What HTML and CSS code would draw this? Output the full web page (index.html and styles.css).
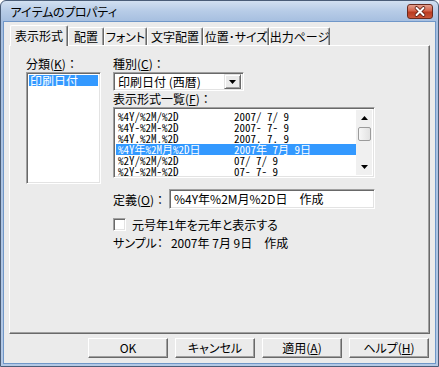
FILE: index.html
```html
<!DOCTYPE html>
<html lang="ja">
<head>
<meta charset="utf-8">
<title>アイテムのプロパティ</title>
<link rel="stylesheet" href="styles.css">
</head>
<body>
<div class="window">
  <div class="titlebar">
    <span class="title">アイテムのプロパティ</span>
    <div class="close">
      <svg width="26" height="15" viewBox="0 0 26 15">
        <path d="M9.5 4 L16.5 11 M16.5 4 L9.5 11" stroke="#5a1a10" stroke-width="3.6" stroke-linecap="round"/>
        <path d="M9.5 4 L16.5 11 M16.5 4 L9.5 11" stroke="#ffffff" stroke-width="2" stroke-linecap="round"/>
      </svg>
    </div>
  </div>
  <div class="client">
    <div class="tabs">
      <div class="tab active t1">表示形式</div>
      <div class="tab t2">配置</div>
      <div class="tab t3">フォント</div>
      <div class="tab t4">文字配置</div>
      <div class="tab t5">位置･サイズ</div>
      <div class="tab t6">出力ページ</div>
    </div>
    <div class="panel">
      <div class="col-left">
        <div class="label">分類(<u>K</u>)：</div>
        <div class="listbox cat">
          <div class="cat-item sel">印刷日付</div>
        </div>
      </div>
      <div class="col-right">
        <div class="label">種別(<u>C</u>)：</div>
        <div class="combo">
          <span class="combo-text">印刷日付 (西暦)</span>
          <span class="combo-btn">
            <svg width="7" height="4" viewBox="0 0 7 4"><path d="M0 0 H7 L3.5 4 Z" fill="#000"/></svg>
          </span>
        </div>
        <div class="label label-tight">表示形式一覧(<u>F</u>)：</div>
        <div class="listbox fmt">
          <div class="rows">
            <div class="row"><span>%4Y/%2M/%2D</span><span>2007/ 7/ 9</span></div>
            <div class="row"><span>%4Y-%2M-%2D</span><span>2007- 7- 9</span></div>
            <div class="row"><span>%4Y.%2M.%2D</span><span>2007. 7. 9</span></div>
            <div class="row sel"><span>%4Y年%2M月%2D日</span><span>2007年 7月 9日</span></div>
            <div class="row"><span>%2Y/%2M/%2D</span><span>07/ 7/ 9</span></div>
            <div class="row"><span>%2Y-%2M-%2D</span><span>07- 7- 9</span></div>
          </div>
          <div class="scrollbar">
            <div class="sb-arrow">
              <svg width="7" height="4" viewBox="0 0 7 4"><path d="M0 4 H7 L3.5 0 Z" fill="#000"/></svg>
            </div>
            <div class="sb-track">
              <div class="sb-thumb"></div>
            </div>
            <div class="sb-arrow">
              <svg width="7" height="4" viewBox="0 0 7 4"><path d="M0 0 H7 L3.5 4 Z" fill="#000"/></svg>
            </div>
          </div>
        </div>
        <div class="def-row">
          <span class="def-label">定義(<u>O</u>)：</span>
          <div class="textbox">%4Y年%2M月%2D日　作成</div>
        </div>
        <div class="check-row">
          <span class="checkbox"></span>
          <span>元号年1年を元年と表示する</span>
        </div>
        <div class="sample"><span class="sample-key">サンプル：</span>2007年 7月 9日　作成</div>
      </div>
    </div>
    <div class="buttons">
      <div class="btn">OK</div>
      <div class="btn">キャンセル</div>
      <div class="btn">適用(<u>A</u>)</div>
      <div class="btn">ヘルプ(<u>H</u>)</div>
    </div>
  </div>
</div>
</body>
</html>
```

FILE: styles.css
```css
html, body {
  margin: 0;
  padding: 0;
  background: #ffffff;
}

body {
  font-family: "Noto Sans CJK JP", sans-serif;
  font-size: 12px;
  color: #000;
}

.window {
  width: 439px;
  height: 367px;
  box-sizing: border-box;
  border: 1px solid #4a5d78;
  border-radius: 6px 6px 0 0;
  background: linear-gradient(to bottom, #d2e0f1 0px, #b7cce7 10px, #a5bedf 21px, #b4c9e5 100%);
  padding: 0 3px 3px;
  display: flex;
  flex-direction: column;
}

.titlebar {
  height: 21px;
  display: flex;
  align-items: center;
  flex-shrink: 0;
}

.title {
  margin-left: 6px;
  font-size: 12px;
  letter-spacing: -1px;
  line-height: 14px;
  color: #000;
}

.close {
  margin-left: auto;
  margin-right: 2px;
  width: 26px;
  height: 15px;
  box-sizing: border-box;
  border: 1px solid #6a2a1e;
  border-radius: 3px;
  background: linear-gradient(to bottom, #e4a08f 0%, #d4634a 45%, #b93a1f 55%, #c8553a 100%);
  display: flex;
  align-items: center;
  justify-content: center;
  overflow: hidden;
}

.close svg {
  display: block;
  margin: -1px;
}

.client {
  flex: 1;
  background: #ebebeb;
  box-shadow: 0 0 0 1px #7097c8;
  padding: 3px 5px 0;
  display: flex;
  flex-direction: column;
}

/* tabs */
.tabs {
  display: flex;
  align-items: flex-end;
  height: 20px;
  margin-left: 1px;
  position: relative;
  z-index: 1;
}

.tab {
  box-sizing: border-box;
  height: 18px;
  border-top: 1px solid #ffffff;
  border-left: 1px solid #ffffff;
  border-right: 1px solid #696969;
  border-radius: 2px 2px 0 0;
  box-shadow: inset -1px 0 0 #a0a0a0;
  background: #ebebeb;
  display: flex;
  align-items: center;
  justify-content: center;
  white-space: nowrap;
  line-height: 14px;
  font-feature-settings: "palt";
}

.tab.active {
  height: 21px;
  margin-bottom: -1px;
  padding-bottom: 1px;
}

.t1 { width: 58px; }
.t2 { width: 36px; }
.t3 { width: 43px; }
.t4 { width: 56px; }
.t5 { width: 66px; }
.t6 { width: 61px; }

/* panel */
.panel {
  box-sizing: border-box;
  height: 289px;
  border-top: 1px solid #ffffff;
  border-left: 1px solid #ffffff;
  border-right: 1px solid #696969;
  border-bottom: 1px solid #696969;
  box-shadow: inset -1px -1px 0 #a0a0a0;
  padding: 9px 0 0 16px;
  display: flex;
  gap: 12px;
}

.label {
  height: 17px;
  line-height: 17px;
  white-space: nowrap;
}

.label-tight {
  height: 16px;
  line-height: 16px;
}

.col-left {
  width: 75px;
  display: flex;
  flex-direction: column;
}

.col-right {
  width: 262px;
  display: flex;
  flex-direction: column;
  align-items: flex-start;
}

/* sunken 3D field */
.listbox, .combo, .textbox, .checkbox {
  box-sizing: border-box;
  background: #ffffff;
  border-top: 1px solid #a0a0a0;
  border-left: 1px solid #a0a0a0;
  border-right: 1px solid #ffffff;
  border-bottom: 1px solid #ffffff;
  box-shadow: inset 1px 1px 0 #696969, inset -1px -1px 0 #e3e3e3;
}

.listbox.cat {
  height: 112px;
  padding: 2px 2px;
}

.cat-item {
  height: 11px;
  line-height: 11px;
  padding-left: 1px;
  white-space: nowrap;
}

.sel {
  background: #3399ff;
  color: #ffffff;
}

.combo {
  width: 131px;
  height: 19px;
  display: flex;
  align-items: center;
  padding: 2px 2px 2px 4px;
}

.combo-text {
  flex: 1;
  line-height: 14px;
  white-space: nowrap;
}

.combo-btn {
  box-sizing: border-box;
  width: 17px;
  height: 15px;
  background: #ebebeb;
  border-top: 1px solid #e3e3e3;
  border-left: 1px solid #e3e3e3;
  border-right: 1px solid #696969;
  border-bottom: 1px solid #696969;
  box-shadow: inset 1px 1px 0 #ffffff, inset -1px -1px 0 #a0a0a0;
  display: flex;
  align-items: center;
  justify-content: center;
}

.combo-btn svg, .sb-arrow svg {
  display: block;
}

.listbox.fmt {
  width: 262px;
  height: 71px;
  padding: 2px;
  display: flex;
}

.rows {
  flex: 1;
  padding-top: 1px;
}

.row {
  display: grid;
  grid-template-columns: 116px 1fr;
  height: 11px;
  line-height: 11px;
  padding-left: 2px;
  font-family: "Noto Sans Mono CJK JP", "Liberation Mono", monospace;
  font-size: 11px;
  white-space: pre;
}

.scrollbar {
  width: 16px;
  background: #f0f0f0;
  display: flex;
  flex-direction: column;
}

.sb-arrow {
  height: 16px;
  display: flex;
  align-items: center;
  justify-content: center;
}

.sb-track {
  flex: 1;
  padding: 1px 1px 0 2px;
}

.sb-thumb {
  height: 14px;
  box-sizing: border-box;
  border: 1px solid #9b9b9b;
  border-radius: 2px;
  background: linear-gradient(to right, #f7f7f7, #e2e2e2);
}

.def-row {
  width: 262px;
  margin-top: 11px;
  display: flex;
  align-items: center;
  height: 20px;
}

.def-label {
  width: 56px;
  white-space: nowrap;
}

.textbox {
  flex: 1;
  height: 20px;
  padding: 0 4px;
  line-height: 18px;
  white-space: nowrap;
  font-feature-settings: "palt";
}

.check-row {
  margin-top: 9px;
  height: 13px;
  display: flex;
  align-items: center;
  gap: 6px;
  line-height: 13px;
  white-space: nowrap;
  font-feature-settings: "palt";
}

.checkbox {
  width: 13px;
  height: 13px;
  flex-shrink: 0;
}

.sample {
  margin-top: 5px;
  line-height: 14px;
  white-space: nowrap;
  font-feature-settings: "palt";
}

.sample-key {
  margin-right: 8px;
}

/* buttons */
.buttons {
  margin-top: 4px;
  display: flex;
  justify-content: flex-end;
  gap: 7px;
  padding-right: 1px;
}

.btn {
  box-sizing: border-box;
  width: 80px;
  height: 20px;
  background: #ebebeb;
  border-top: 1px solid #ffffff;
  border-left: 1px solid #ffffff;
  border-right: 1px solid #696969;
  border-bottom: 1px solid #696969;
  box-shadow: inset -1px -1px 0 #a0a0a0;
  display: flex;
  align-items: center;
  justify-content: center;
  line-height: 14px;
  font-feature-settings: "palt";
  white-space: nowrap;
}
```
